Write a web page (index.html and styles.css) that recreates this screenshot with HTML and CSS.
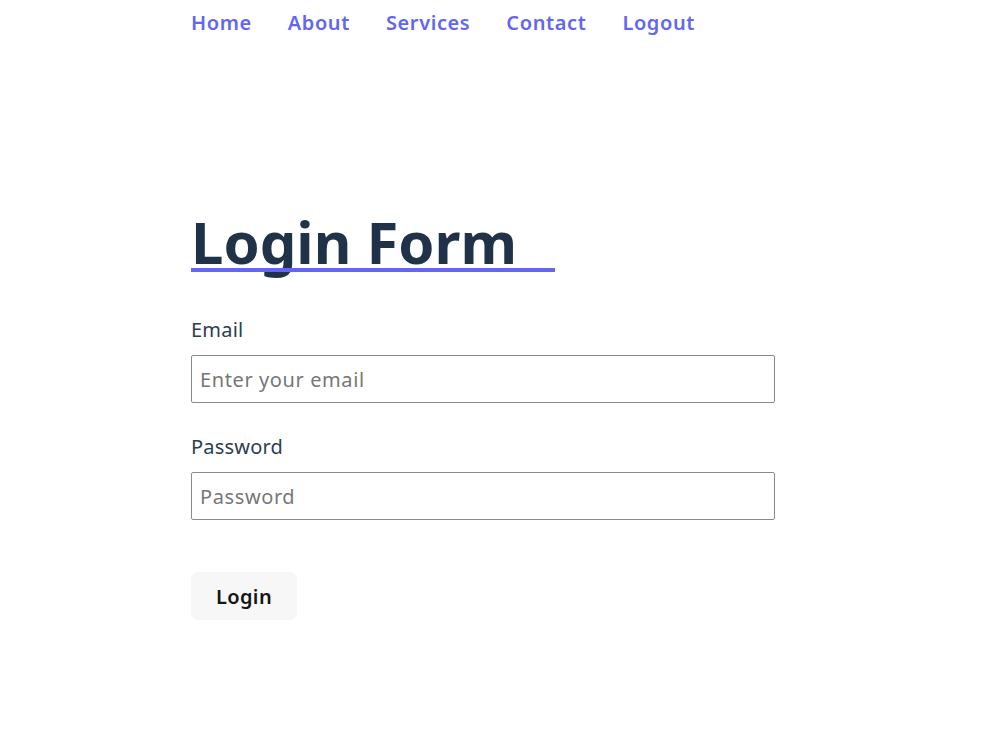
FILE: index.html
```html
<!DOCTYPE html>
<html lang="en">
<head>
    <meta charset="UTF-8">
    <meta name="viewport" content="width=device-width, initial-scale=1.0">
    <title>Login</title>
    <link rel="stylesheet" href="styles.css">
</head>
<body>

    <!-- Top navigation -->
    <nav class="menu">
        <a href="#">Home</a>
        <a href="#">About</a>
        <a href="#">Services</a>
        <a href="#">Contact</a>
        <a href="#">Logout</a>
    </nav>

    <!-- Login form -->
    <main class="contenedor">
        <h1 class="titulo">Login Form</h1>

        <form class="formulario">
            <label for="email">Email</label>
            <input type="email" id="email" placeholder="Enter your email">

            <label for="password">Password</label>
            <input type="password" id="password" placeholder="Password">

            <button type="submit" class="btn">Login</button>
        </form>
    </main>

</body>
</html>
```

FILE: styles.css
```css
/* Colors */
:root {
    --color-primario: #6366f1;
    --color-titulo: #1f3247;
    --color-texto: #2c3e50;
    --color-borde: #8a8a8a;
    --color-boton: #f7f7f7;
}

body {
    font-family: "Noto Sans", "Open Sans", sans-serif;
    color: var(--color-texto);
    background: white;
    margin: 0;
    padding: 0 0 0 191px;
}

/* Navigation */
.menu {
    display: flex;
    gap: 36px;
    height: 44px;
    align-items: center;
}

.menu a {
    color: var(--color-primario);
    font-size: 20px;
    font-weight: 600;
    letter-spacing: 0.6px;
    text-decoration: none;
}

/* Form */
.contenedor {
    width: 584px;
    padding-top: 162px;
}

.titulo {
    position: relative;
    display: inline-block;
    margin: 0;
    width: 364px;
    font-size: 58px;
    font-weight: 700;
    line-height: 72px;
    color: var(--color-titulo);
}

.titulo::after {
    content: "";
    position: absolute;
    left: 0;
    right: 0;
    bottom: 6px;
    height: 4px;
    background: var(--color-primario);
}

.formulario {
    display: flex;
    flex-direction: column;
    padding-top: 38px;
}

.formulario label {
    font-size: 20px;
    line-height: 28px;
    letter-spacing: 0.2px;
    margin-bottom: 11px;
}

.formulario input {
    height: 48px;
    box-sizing: border-box;
    padding: 0 8px;
    font-family: inherit;
    font-size: 20px;
    letter-spacing: 0.6px;
    color: var(--color-texto);
    border: 1px solid var(--color-borde);
    border-radius: 2px;
    margin-bottom: 30px;
}

.formulario input::placeholder {
    color: #777;
}

.btn {
    align-self: flex-start;
    width: 106px;
    height: 48px;
    margin-top: 22px;
    background: var(--color-boton);
    color: #151515;
    font-family: inherit;
    font-size: 20px;
    font-weight: 600;
    letter-spacing: 0.4px;
    border: none;
    border-radius: 8px;
    cursor: pointer;
}
```
